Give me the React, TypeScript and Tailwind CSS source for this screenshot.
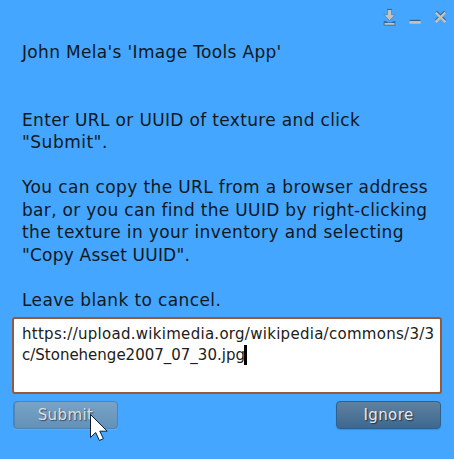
const lines = [
  { text: "John Mela's 'Image Tools App'", spacing: 'tracking-[0.33px]' },
  { text: '', spacing: '' },
  { text: '', spacing: '' },
  { text: 'Enter URL or UUID of texture and click', spacing: 'tracking-[0.34px]' },
  { text: '"Submit".', spacing: 'tracking-[0.5px]' },
  { text: '', spacing: '' },
  { text: 'You can copy the URL from a browser address', spacing: 'tracking-[0.37px]' },
  { text: 'bar, or you can find the UUID by right-clicking', spacing: 'tracking-[0.32px]' },
  { text: 'the texture in your inventory and selecting', spacing: 'tracking-[0.39px]' },
  { text: '"Copy Asset UUID".', spacing: 'tracking-[0.2px]' },
  { text: '', spacing: '' },
  { text: 'Leave blank to cancel.', spacing: 'tracking-[0.38px]' },
];

function WindowControls() {
  return (
    <svg className="h-[20px] w-[72px]" viewBox="0 0 72 20" fill="none">
      <path d="M7.5 1.5h4v5.2h3.7L9.5 12.5 3.9 6.7h3.6Z" fill="#c4c3c1" stroke="#527ea6" strokeWidth=".7" />
      <path d="M7.3 1.4h4.4" stroke="#35658f" />
      <path d="M3.7 13.2h2.4l2 1.3h3.1l2-1.3h2.1v4.3H3.7Z" fill="#35658f" />
      <path d="M4.5 15.9h10" stroke="#c4c3c1" strokeWidth="1.8" />
      <path d="M29.8 12.5h10.7" stroke="#35658f" strokeWidth="1.4" />
      <path d="M29.5 14.4h11.3" stroke="#c6c2bc" strokeWidth="2.6" />
      <path d="M56 3.9l9 9M65 3.9l-9 9" stroke="#35658f" strokeWidth="3" />
      <path d="M55.7 4.5l9.6 9.6M65.3 4.5l-9.6 9.6" stroke="#c4c3c1" strokeWidth="2.4" />
    </svg>
  );
}

export default function App() {
  return (
    <main className="relative flex h-[459px] w-[454px] flex-col overflow-hidden bg-[#44a6ff] font-['DejaVu_Sans',sans-serif] text-[#101820]">
      <header className="flex h-[41px] shrink-0 items-start justify-end pr-[2px] pt-2">
        <WindowControls />
      </header>
      <div className="flex flex-col pl-[22px] text-[17px] leading-[22.5px]">
        {lines.map((line, i) => (
          <p key={i} className={`h-[22.5px] whitespace-pre ${line.spacing}`}>{line.text}</p>
        ))}
      </div>
      <div className="ml-3 mt-[6px] h-[77px] w-[430px] shrink-0 rounded-[3px] border-2 border-[#96593b] bg-white pl-2 pt-[5px] text-[15px] leading-[21px] text-[#202020]">
        <p className="tracking-[0.28px]">https://upload.wikimedia.org/wikipedia/commons/3/3</p>
        <p className="flex items-start">
          c/Stonehenge2007_07_30.jpg
          <span className="-ml-[1px] h-5 w-[3px] bg-black" />
        </p>
      </div>
      <div className="mt-[7px] flex justify-between px-[13px] text-[15px] tracking-[0.4px] text-[#e8e8e8]">
        <button className="h-7 w-[105px] rounded-[4px] border border-[#4e83b3] bg-linear-to-b from-[#79a3c6] to-[#6391b8] pt-px text-[#dedede] shadow-[0_1px_1px_#5bb0fa,inset_1px_0_0_#5585b0] [text-shadow:1px_1px_1px_#344e65]">Submit</button>
        <button className="h-7 w-[105px] rounded-[4px] border border-[#2c608f] bg-linear-to-b from-[#60819f] to-[#3d6890] pt-px shadow-[0_1px_1px_#3a91df] [text-shadow:1px_1px_1px_#1d3347]">Ignore</button>
      </div>
      <svg className="absolute left-[89px] top-[413px] h-[30px] w-[21px]" viewBox="0 0 21 30">
        <path d="M1.5 1.5v23l5.2-5 3.7 8 4-1.8-3.6-7.5h7.4Z" fill="#fff" stroke="#0b1d38" strokeWidth="1" />
      </svg>
    </main>
  );
}
